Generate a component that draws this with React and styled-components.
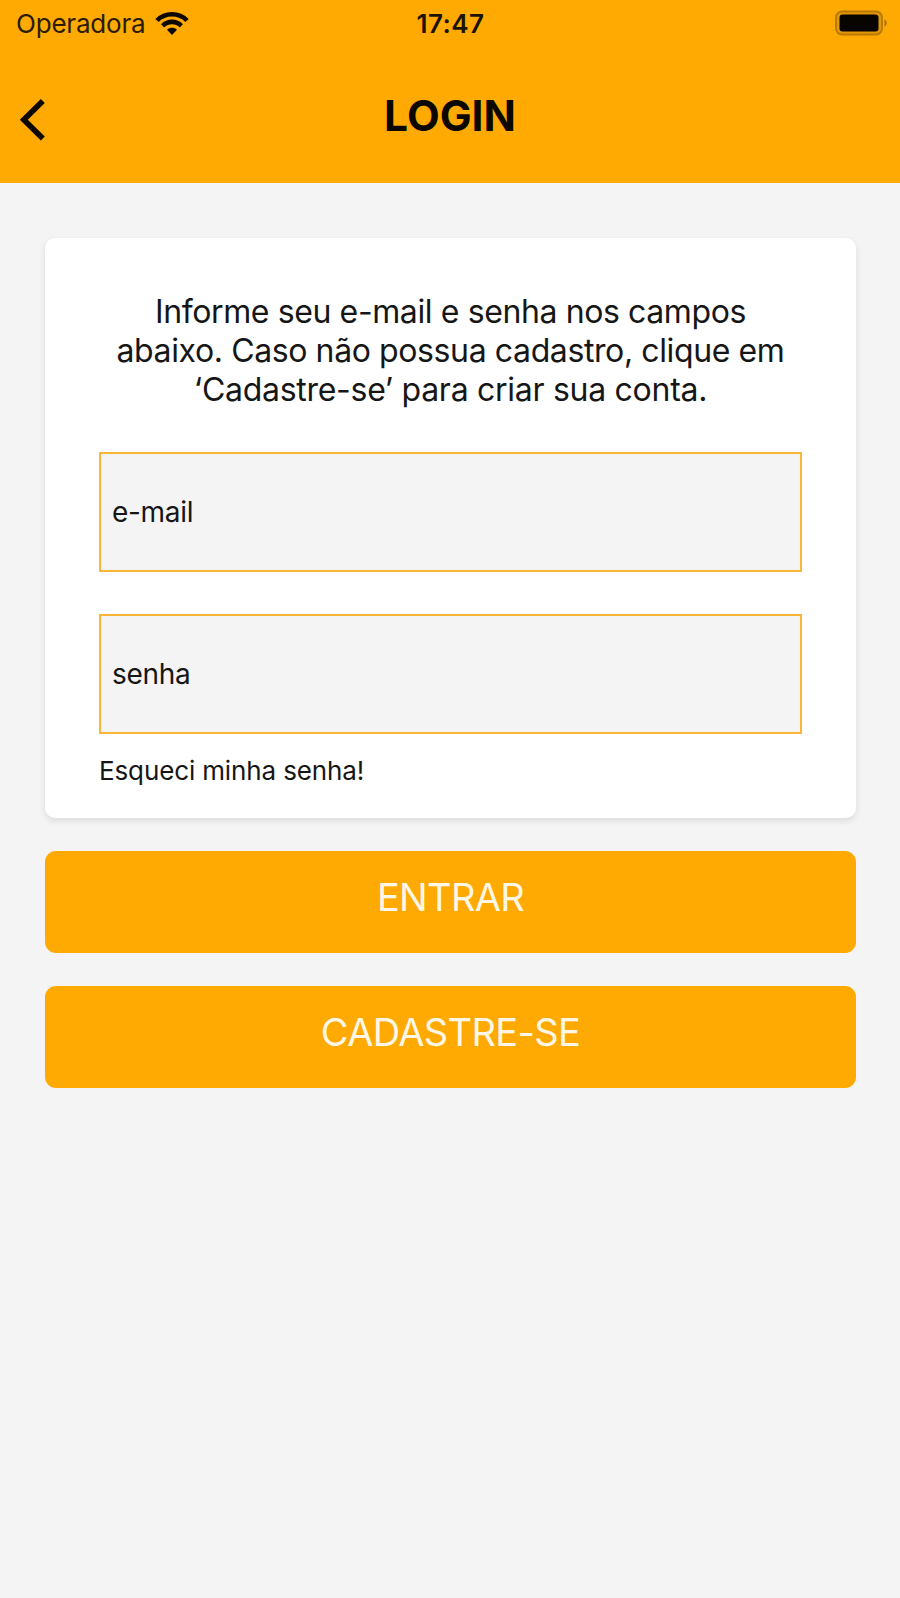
import React from "react";
import styled, { createGlobalStyle } from "styled-components";

const GlobalStyle = createGlobalStyle`
  * { box-sizing: border-box; }
  body {
    margin: 0;
    background: #f4f4f4;
    font-family: Inter, "Liberation Sans", sans-serif;
    color: #161616;
  }
`;

const Screen = styled.div`
  min-height: 1598px;
  background: #f4f4f4;
`;

const Header = styled.header`
  height: 183px;
  background: #ffa903;
`;

const StatusBar = styled.div`
  display: grid;
  grid-template-columns: 1fr auto 1fr;
  align-items: center;
  height: 48px;
  padding: 0 12px 0 16px;
`;

const Carrier = styled.div`
  display: flex;
  align-items: center;
  gap: 10px;
  font-size: 26px;
  line-height: 32px;
  letter-spacing: -0.2px;
  color: #2a1c02;
`;

const WifiIcon = styled.svg`
  width: 34px;
  height: 26px;
  margin-top: -3px;
`;

const Clock = styled.time`
  margin-right: 3px;
  font-size: 26px;
  font-weight: 600;
  line-height: 32px;
  letter-spacing: 0.5px;
  color: #1b1200;
`;

const BatteryIcon = styled.svg`
  justify-self: end;
  width: 54px;
  height: 26px;
  margin-top: -3px;
`;

const NavBar = styled.div`
  display: grid;
  grid-template-columns: 60px 1fr 60px;
  padding-top: 42px;
`;

const BackButton = styled.button`
  display: flex;
  width: 60px;
  height: 60px;
  padding: 0;
  border: 0;
  background: none;
`;

const Title = styled.h1`
  margin: 1px 0 0;
  text-align: center;
  font-size: 42.5px;
  font-weight: 700;
  line-height: 50px;
  letter-spacing: 0;
  color: #0c0800;
`;

const Content = styled.main`
  display: flex;
  flex-direction: column;
  gap: 33px;
  padding: 55px 44px 0 45px;
`;

const Card = styled.section`
  height: 580px;
  padding: 54px 54px 0;
  border-radius: 10px;
  background: #fff;
  box-shadow: 0 3px 7px rgba(0, 0, 0, 0.1);
`;

const Intro = styled.p`
  margin: 0 0 43px;
  text-align: center;
  font-size: 32px;
  line-height: 39px;
  white-space: nowrap;
`;

const IntroLine = styled.span`
  display: block;
  letter-spacing: ${(p) => p.$spacing || "0"};
`;

const Field = styled.div`
  display: flex;
  align-items: center;
  height: 120px;
  margin-bottom: ${(p) => p.$gap};
  padding-left: 11px;
  border: 2px solid #fbb638;
  background: #f4f4f4;
  font-size: 28px;
  line-height: 34px;
  letter-spacing: -0.3px;
`;

const ForgotLink = styled.a`
  display: block;
  font-size: 26px;
  line-height: 32px;
  letter-spacing: -0.13px;
`;

const Buttons = styled.div`
  display: flex;
  flex-direction: column;
  gap: 33px;
`;

const ActionButton = styled.button`
  display: block;
  width: 100%;
  height: 102px;
  padding: 0 0 10px;
  border: 0;
  border-radius: 11px;
  background: #ffa903;
  color: #fff7e6;
  font-family: inherit;
  font-size: 38px;
  font-weight: 400;
  line-height: 46px;
  letter-spacing: -0.65px;
`;

export default function App() {
  return (
    <Screen>
      <GlobalStyle />
      <Header>
        <StatusBar>
          <Carrier>
            <span>Operadora</span>
            <WifiIcon viewBox="0 0 34 26">
              <g fill="none" stroke="#0c0800" strokeWidth="4.6">
                <path d="M2 10.5 C10 2.2 24 2.2 32 10.5" />
                <path d="M7.6 15.8 C13 10.6 21 10.6 26.4 15.8" />
              </g>
              <path d="M12 19.8 C15 17.2 19 17.2 22 19.8 L17 25 Z" fill="#0c0800" />
            </WifiIcon>
          </Carrier>
          <Clock>17:47</Clock>
          <BatteryIcon viewBox="0 0 54 26">
            <rect x="2" y="1.5" width="46" height="23" rx="6" fill="#e29704" stroke="#b97b04" strokeWidth="2" />
            <rect x="5.5" y="4.5" width="39" height="17" rx="3" fill="#080500" />
            <path d="M50.5 9 Q55 13 50.5 17 Z" fill="#a66e04" />
          </BatteryIcon>
        </StatusBar>
        <NavBar>
          <BackButton aria-label="Voltar">
            <svg width="60" height="60" viewBox="0 0 60 60">
              <path d="M42.8 11 L23.8 29.8 L42.8 48.6" fill="none" stroke="#0c0800" strokeWidth="5.6" />
            </svg>
          </BackButton>
          <Title>LOGIN</Title>
        </NavBar>
      </Header>
      <Content>
        <Card>
          <Intro>
            <IntroLine $spacing="-0.39px">Informe seu e-mail e senha nos campos</IntroLine>
            <IntroLine $spacing="-0.39px">abaixo. Caso não possua cadastro, clique em</IntroLine>
            <IntroLine $spacing="-0.28px">‘Cadastre-se’ para criar sua conta.</IntroLine>
          </Intro>
          <Field $gap="42px">e-mail</Field>
          <Field $gap="21px">senha</Field>
          <ForgotLink>Esqueci minha senha!</ForgotLink>
        </Card>
        <Buttons>
          <ActionButton>ENTRAR</ActionButton>
          <ActionButton>CADASTRE-SE</ActionButton>
        </Buttons>
      </Content>
    </Screen>
  );
}
